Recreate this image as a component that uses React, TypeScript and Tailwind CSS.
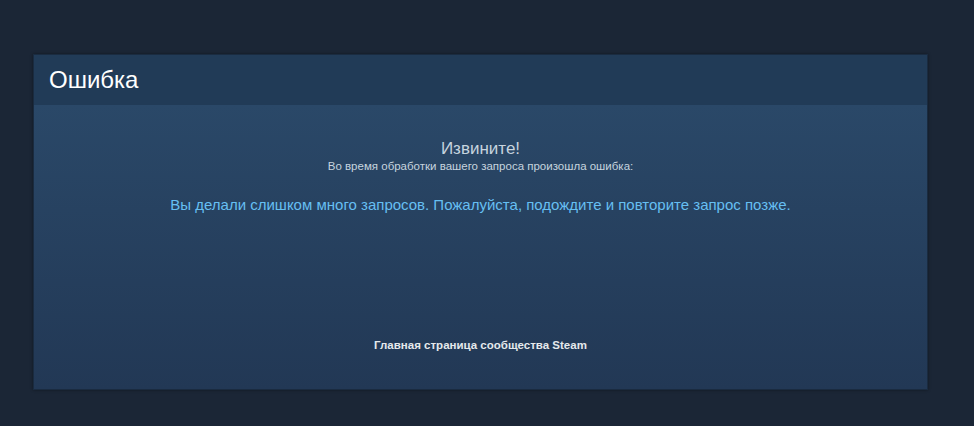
export default function App() {
  return (
    <div
      className="min-h-[426px] w-full bg-[#1b2636] pt-[54px]"
      style={{ fontFamily: '"Liberation Sans", Arial, sans-serif' }}
    >
      <div className="ml-[33px] w-[895px] border border-[#1a2b40] shadow-[0_0_3px_rgba(0,0,0,0.4)]">
        <div className="flex h-[50px] items-center bg-[#213b57] px-[15px]">
          <h1 className="text-[24px] leading-none text-white">Ошибка</h1>
        </div>
        <div className="flex h-[284px] flex-col items-center bg-gradient-to-b from-[#2a4868] to-[#223855] pt-[33px] pb-[36px] text-center">
          <h2 className="text-[17px] leading-[21px] text-[#c6d4df]">Извините!</h2>
          <p className="text-[11.5px] leading-[15px] text-[#c6d4df]">
            Во время обработки вашего запроса произошла ошибка:
          </p>
          <p className="mt-[22px] text-[15px] leading-[18px] text-[#66bff2]">
            Вы делали слишком много запросов. Пожалуйста, подождите и повторите запрос позже.
          </p>
          <a href="#" className="mt-auto text-[11.5px] font-bold leading-[16px] text-[#e5e9ec]">
            Главная страница сообщества Steam
          </a>
        </div>
      </div>
    </div>
  )
}
